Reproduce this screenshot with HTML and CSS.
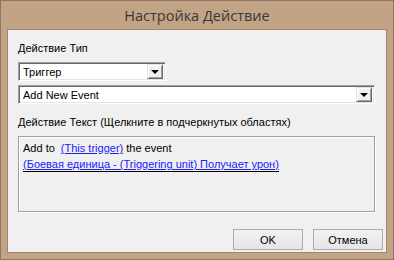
FILE: index.html
```html
<!DOCTYPE html>
<html>

<head>
    <meta charset="UTF-8">
    <title>Настройка Действие</title>
    <link rel="stylesheet" href="styles.css">
</head>

<body>
    <div class="window">
        <div class="title-bar">Настройка Действие</div>
        <div class="content">
            <div class="label">Действие Тип</div>
            <div class="combo combo-short">
                <span class="combo-text">Триггер</span>
                <span class="combo-button"><span class="arrow"></span></span>
            </div>
            <div class="combo combo-wide">
                <span class="combo-text">Add New Event</span>
                <span class="combo-button"><span class="arrow"></span></span>
            </div>
            <div class="label label-text">Действие Текст (Щелкните в подчеркнутых областях)</div>
            <div class="text-box">
                <div class="line">Add to <a class="link">(This trigger)</a> the event</div>
                <div class="line"><a class="link link-focus">(Боевая единица - (Triggering unit) Получает урон)</a></div>
            </div>
            <div class="buttons">
                <button class="btn">OK</button>
                <button class="btn">Отмена</button>
            </div>
        </div>
    </div>
</body>

</html>
```

FILE: styles.css
```css
body {
    margin: 0;
    padding: 0;
    width: 394px;
    height: 260px;
    overflow: hidden;
    font-family: "Liberation Sans", Arial, sans-serif;
    font-size: 11px;
    color: #000;
}

.window {
    box-sizing: border-box;
    width: 394px;
    height: 260px;
    border: 1px solid #8f7661;
    background: #c3a386;
    display: flex;
    flex-direction: column;
    padding: 0 6px 6px 6px;
}

.title-bar {
    height: 28px;
    line-height: 29px;
    text-align: center;
    font-family: "Open Sans", "Noto Sans", sans-serif;
    font-size: 14.5px;
    color: #383838;
}

.content {
    flex: 1;
    border: 1px solid #a2866b;
    background: #f0f0f0;
    display: flex;
    flex-direction: column;
    align-items: flex-start;
    padding: 0 0 0 10px;
}

.label {
    margin-top: 12px;
    line-height: 13px;
}

.label-text {
    margin-top: 12px;
}

.combo {
    box-sizing: border-box;
    height: 19px;
    background: #fff;
    border: 1px solid;
    border-color: #a0a0a0 #fff #fff #a0a0a0;
    box-shadow: inset 1px 1px #696969, inset -1px -1px #e3e3e3;
    display: flex;
    align-items: center;
    justify-content: space-between;
    padding: 1px 2px 1px 4px;
}

.combo-short {
    width: 148px;
    margin-top: 7px;
}

.combo-wide {
    width: 357px;
    margin-top: 4px;
}

.combo-button {
    box-sizing: border-box;
    width: 16px;
    height: 15px;
    background: #f0f0f0;
    border: 1px solid;
    border-color: #e3e3e3 #696969 #696969 #e3e3e3;
    box-shadow: inset 1px 1px #fff, inset -1px -1px #a0a0a0;
    display: flex;
    align-items: center;
    justify-content: center;
}

.arrow {
    width: 0;
    height: 0;
    border-left: 4px solid transparent;
    border-right: 4px solid transparent;
    border-top: 4px solid #000;
}

.text-box {
    box-sizing: border-box;
    width: 357px;
    height: 76px;
    margin-top: 7px;
    border: 1px solid #a0a0a0;
    box-shadow: inset 1px 1px #fff, 1px 1px #fff;
    padding: 3px 4px;
}

.line {
    line-height: 16px;
}

.link {
    color: #2020ff;
    text-decoration: underline;
    margin-left: 3px;
}

.line .link-focus {
    margin-left: 0;
    border-bottom: 1px solid #000;
    padding-bottom: 1px;
}

.buttons {
    align-self: flex-end;
    display: flex;
    gap: 10px;
    margin-top: 17px;
    margin-right: 3px;
}

.btn {
    box-sizing: border-box;
    width: 70px;
    height: 21px;
    border: 1px solid #acacac;
    border-radius: 0;
    background: linear-gradient(#f2f2f2, #e5e5e5);
    font-family: "Liberation Sans", Arial, sans-serif;
    font-size: 11px;
    color: #000;
    padding: 0;
}
```
